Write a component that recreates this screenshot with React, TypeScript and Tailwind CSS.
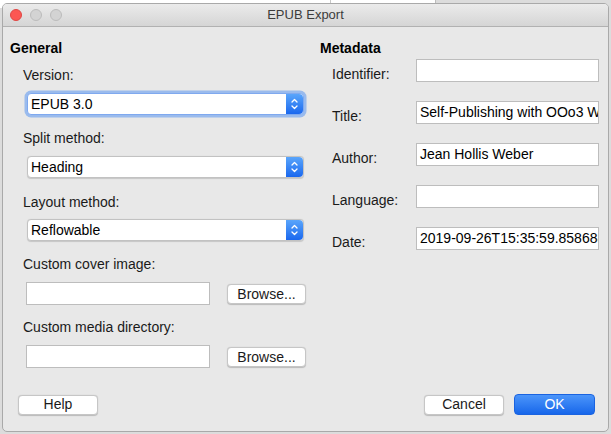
import React from "react";

const Stepper = () => (
  <div className="w-[17px] h-full rounded-r-[4px] bg-gradient-to-b from-[#5aa5fb] to-[#1a67ee] flex items-center justify-center">
    <svg width="9" height="14" viewBox="0 0 9 14" fill="none" stroke="white" strokeWidth="1.3" strokeLinecap="round" strokeLinejoin="round">
      <path d="M2 5 L4.5 2.5 L7 5" />
      <path d="M2 9 L4.5 11.5 L7 9" />
    </svg>
  </div>
);

const Select = ({ value, focused }: { value: string; focused?: boolean }) => (
  <div
    className={
      focused
        ? "ml-[24px] w-[277px] h-[22px] flex bg-white rounded-[4px] border border-[#7fa9ef] shadow-[0_0_0_2.5px_rgba(90,150,240,0.55)]"
        : "ml-[24px] w-[277px] h-[22px] flex bg-white rounded-[4px] border border-[#c2c2c2] shadow-[0_0.5px_1px_rgba(0,0,0,0.15)]"
    }
  >
    <div className="flex-1 pl-[3px] flex items-center text-[14px] text-black leading-[16px]">{value}</div>
    <Stepper />
  </div>
);

const Btn = ({ label, w }: { label: string; w: string }) => (
  <div
    className={`${w} h-[20px] bg-white rounded-[4px] border border-[#c6c6c6] shadow-[0_0.5px_1px_rgba(0,0,0,0.2)] flex items-center justify-center text-[14px] text-[#1a1a1a]`}
  >
    {label}
  </div>
);

const Field = ({ value }: { value?: string }) => (
  <div className="w-[183px] h-[23px] bg-white border border-[#bdbdbd] flex items-center pl-[3px] text-[14px] text-black overflow-hidden whitespace-nowrap">
    {value}
  </div>
);

const MetaRow = ({ label, value }: { label: string; value?: string }) => (
  <div className="flex items-center h-[23px]">
    <div className="w-[103px] shrink-0 pl-[19px] mt-[6px] text-[14px] text-[#1a1a1a] leading-[16px] whitespace-nowrap">{label}</div>
    <Field value={value} />
  </div>
);

export default function App() {
  return (
    <div className="relative w-[611px] h-[434px] bg-[#dcdcdc] overflow-hidden font-['Liberation_Sans',Arial,sans-serif]">
      {/* desktop behind */}
      <div className="absolute left-0 top-0 w-[435px] h-[8px] bg-white" />
      <div className="absolute left-[330px] top-0 w-px h-[8px] bg-[#c8c8c8]" />
      <div className="absolute left-[435px] top-0 w-px h-[8px] bg-[#bcbcbc]" />

      {/* window */}
      <div className="absolute left-[2px] top-[3px] w-[607px] h-[429px] rounded-[5px] border border-[#a9a9a9] bg-[#e8e8e8] flex flex-col overflow-hidden">
        {/* title bar */}
        <div className="relative h-[23px] shrink-0 bg-gradient-to-b from-[#ebebeb] to-[#d5d5d5] border-b border-[#b1b1b1] flex items-center">
          <div className="flex items-center gap-[8px] pl-[7px]">
            <div className="w-[12px] h-[12px] rounded-full bg-[#fc5753] border border-[#df4744]" />
            <div className="w-[12px] h-[12px] rounded-full bg-[#d3d3d3] border border-[#bcbcbc]" />
            <div className="w-[12px] h-[12px] rounded-full bg-[#d3d3d3] border border-[#bcbcbc]" />
          </div>
          <div className="absolute inset-0 flex items-center justify-center text-[13px] text-[#3c3c3c]">EPUB Export</div>
        </div>

        {/* body */}
        <div className="flex flex-1">
          {/* left column */}
          <div className="w-[307px] pl-[7px] pt-[13px] flex flex-col text-[14px] leading-[16px] text-[#1a1a1a]">
            <div className="font-bold text-black">General</div>
            <div className="ml-[13px] mt-[11px]">Version:</div>
            <div className="mt-[10px] -ml-[7px]">
              <Select value="EPUB 3.0" focused />
            </div>
            <div className="ml-[13px] mt-[15px]">Split method:</div>
            <div className="mt-[10px] -ml-[7px]">
              <Select value="Heading" />
            </div>
            <div className="ml-[13px] mt-[16px]">Layout method:</div>
            <div className="mt-[9px] -ml-[7px]">
              <Select value="Reflowable" />
            </div>
            <div className="ml-[13px] mt-[15px]">Custom cover image:</div>
            <div className="mt-[10px] ml-[16px] flex items-center gap-[17px]">
              <div className="w-[184px] h-[23px] bg-white border border-[#bdbdbd]" />
              <Btn label="Browse..." w="w-[79px]" />
            </div>
            <div className="ml-[13px] mt-[14px]">Custom media directory:</div>
            <div className="mt-[10px] ml-[16px] flex items-center gap-[17px]">
              <div className="w-[184px] h-[23px] bg-white border border-[#bdbdbd]" />
              <Btn label="Browse..." w="w-[79px]" />
            </div>
          </div>

          {/* right column */}
          <div className="flex-1 pl-[3px] pt-[13px] flex flex-col">
            <div className="ml-[7px] font-bold text-[14px] leading-[16px] text-black">Metadata</div>
            <div className="mt-[3px] flex flex-col gap-[19px]">
              <MetaRow label="Identifier:" />
              <MetaRow label="Title:" value="Self-Publishing with OOo3 Writer" />
              <MetaRow label="Author:" value="Jean Hollis Weber" />
              <MetaRow label="Language:" />
              <MetaRow label="Date:" value="2019-09-26T15:35:59.858688" />
            </div>
          </div>
        </div>

        {/* footer */}
        <div className="flex items-center pl-[15px] pr-[13px] pb-[16px]">
          <Btn label="Help" w="w-[80px]" />
          <div className="flex-1" />
          <Btn label="Cancel" w="w-[80px]" />
          <div className="ml-[10px] w-[81px] h-[21px] rounded-[4px] bg-gradient-to-b from-[#4b95fa] to-[#1666ea] border border-[#1a63e0] flex items-center justify-center text-[14px] text-white">
            OK
          </div>
        </div>
      </div>
    </div>
  );
}
